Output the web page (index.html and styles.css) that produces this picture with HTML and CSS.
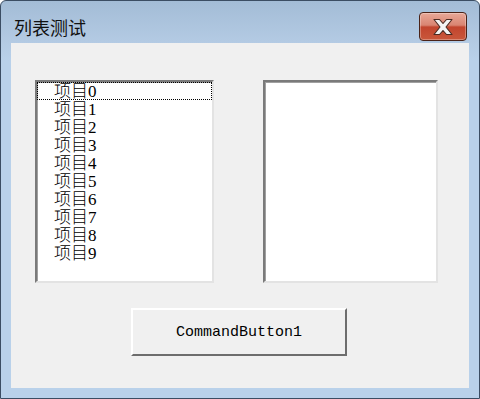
FILE: index.html
```html
<!DOCTYPE html>
<html>
<head>
<meta charset="utf-8">
<link rel="stylesheet" href="styles.css">
</head>
<body>
<div class="window">
  <div class="titlebar">
    <span class="title">列表测试</span>
    <div class="close">
      <svg width="24" height="18" viewBox="0 0 24 18">
        <path d="M3 1.5 L8.5 1.5 L12 5.5 L15.5 1.5 L21 1.5 L15 9 L21 16.5 L15.5 16.5 L12 12.5 L8.5 16.5 L3 16.5 L9 9 Z" fill="#f4f4f4" stroke="#4a2a22" stroke-width="1.1" stroke-linejoin="round"/>
      </svg>
    </div>
  </div>
  <div class="client">
    <div class="lists">
      <div class="listbox left">
        <div class="item focus">项目0</div>
        <div class="item">项目1</div>
        <div class="item">项目2</div>
        <div class="item">项目3</div>
        <div class="item">项目4</div>
        <div class="item">项目5</div>
        <div class="item">项目6</div>
        <div class="item">项目7</div>
        <div class="item">项目8</div>
        <div class="item">项目9</div>
      </div>
      <div class="listbox right"></div>
    </div>
    <div class="button">CommandButton1</div>
  </div>
</div>
</body>
</html>
```
FILE: styles.css
```css
html, body {
  margin: 0;
  padding: 0;
  background: #fff;
}
.window {
  width: 480px;
  height: 399px;
  box-sizing: border-box;
  border: 1px solid #3b4d63;
  border-radius: 6px 6px 0 0;
  background: linear-gradient(to bottom, #a3bcd6 0px, #b3cae3 40px, #b9d1ea 60px, #b9d1ea 100%);
  padding: 0 10px 10px 10px;
  display: flex;
  flex-direction: column;
}
.titlebar {
  height: 42px;
  display: flex;
  align-items: flex-start;
  justify-content: space-between;
}
.title {
  font-family: "Noto Sans CJK SC", sans-serif;
  font-size: 18px;
  line-height: 24px;
  color: #111;
  margin: 14px 0 0 3px;
}
.close {
  width: 48px;
  height: 29px;
  box-sizing: border-box;
  border: 1px solid #4a2318;
  border-radius: 4px;
  background: linear-gradient(to bottom, #e8a898 0%, #d98572 45%, #c2452e 52%, #c9573b 100%);
  box-shadow: inset 0 0 0 1px rgba(255,255,255,0.3);
  display: flex;
  align-items: center;
  justify-content: center;
  margin: 11px 2px 0 0;
}
.close svg { display: block; }
.client {
  flex: 1;
  background: #f0f0f0;
  padding: 37px 0 0 24px;
}
.lists {
  display: flex;
  gap: 49px;
}
.listbox {
  height: 203px;
  box-sizing: border-box;
  background: #fff;
  border-style: solid;
  border-width: 2px;
  border-color: #7a7a7a #e3e3e3 #e3e3e3 #7a7a7a;
  box-shadow: inset 1px 1px 0 #a0a0a0;
}
.listbox.left { width: 179px; }
.listbox.right { width: 175px; }
.item {
  height: 18px;
  line-height: 18px;
  box-sizing: border-box;
  padding-left: 16px;
  font-family: "Liberation Serif", "Noto Sans CJK SC", serif;
  font-size: 17px;
  font-weight: 300;
  color: #000;
  border: 1px solid transparent;
}
.item.focus {
  border: 1px dotted #000;
}
.button {
  width: 216px;
  height: 48px;
  box-sizing: border-box;
  margin: 25px 0 0 96px;
  background: #f0f0f0;
  border-style: solid;
  border-width: 2px;
  border-color: #fff #6d6d6d #6d6d6d #fff;
  display: flex;
  align-items: center;
  justify-content: center;
  font-family: "Liberation Mono", monospace;
  font-size: 15px;
  color: #000;
}
```
